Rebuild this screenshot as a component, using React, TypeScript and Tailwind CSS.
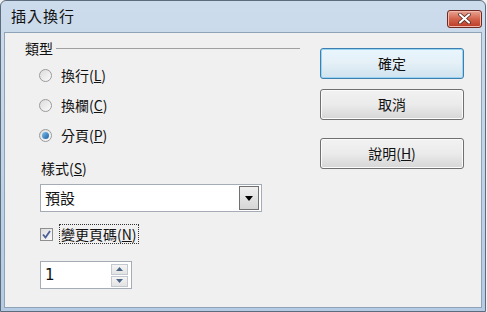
import React from "react";

const font = { fontFamily: '"Noto Sans CJK TC", "Noto Sans", sans-serif' };

function Radio({ checked }: { checked?: boolean }) {
  return (
    <span className="relative flex h-[13px] w-[13px] items-center justify-center rounded-full border border-[#9a9a9a] bg-gradient-to-br from-[#dcdcdc] to-[#fbfbfb]">
      {checked && (
        <span className="h-[7px] w-[7px] rounded-full bg-gradient-to-br from-[#7ec2f1] to-[#1a5f9e]" />
      )}
    </span>
  );
}

function Btn({ children, focused }: { children: React.ReactNode; focused?: boolean }) {
  return (
    <div
      className={
        "flex h-[31px] w-[144px] items-center justify-center rounded-[3px] border text-[14px] text-[#111] " +
        (focused
          ? "border-[#3c7fb1] bg-gradient-to-b from-[#eaf6fd] via-[#e4eff6] to-[#cfe3ef] shadow-[inset_0_0_0_1px_#9bd4f1]"
          : "border-[#707070] bg-gradient-to-b from-[#f2f2f2] via-[#ebebeb] to-[#d6d6d6] shadow-[inset_0_0_0_1px_#fbfbfb]")
      }
    >
      {children}
    </div>
  );
}

export default function App() {
  return (
    <div className="h-[312px] w-[487px] overflow-hidden bg-[#eef0f2]" style={font}>
      <div className="mr-[1px] flex h-full flex-col rounded-t-[6px] border border-[#5d6c7c] bg-gradient-to-b from-[#cddcec] to-[#b4cbe3]">
        {/* title bar */}
        <div className="flex h-[31px] shrink-0 items-center justify-between pl-[10px] pr-[3px]">
          <span className="text-[15px] tracking-[1px] text-[#111]">插入換行</span>
          <div className="mt-[4px] flex h-[18px] w-[35px] items-center justify-center rounded-[3px] border border-[#6e2a23] bg-gradient-to-b from-[#e8a493] via-[#d3634c] to-[#b93a25] shadow-[inset_0_0_0_1px_#f0b9ab]">
            <svg width="13" height="11" viewBox="0 0 13 11">
              <path d="M2 1.5 L11 9.5 M11 1.5 L2 9.5" stroke="#4a2018" strokeWidth="3.6" strokeLinecap="round" />
              <path d="M2 1.5 L11 9.5 M11 1.5 L2 9.5" stroke="#ffffff" strokeWidth="2.2" strokeLinecap="round" />
            </svg>
          </div>
        </div>
        {/* content frame */}
        <div className="mx-[3px] mb-[3px] flex flex-1 border border-[#8ea2b8] bg-[#f0f0f0] text-[14px] text-[#111]">
          {/* left column */}
          <div className="flex w-[295px] flex-col">
            <div className="mt-[6px] flex h-[18px] items-center pl-[20px]">
              <span>類型</span>
              <span className="ml-[3px] mt-[1px] h-px flex-1 bg-[#a0a0a0]" />
            </div>
            <div className="mt-[8px] flex flex-col gap-[10px] pl-[34px]">
              <div className="flex h-[20px] items-center gap-[9px]">
                <Radio />
                <span>換行(<u>L</u>)</span>
              </div>
              <div className="flex h-[20px] items-center gap-[9px]">
                <Radio />
                <span>換欄(<u>C</u>)</span>
              </div>
              <div className="flex h-[20px] items-center gap-[9px]">
                <Radio checked />
                <span>分頁(<u>P</u>)</span>
              </div>
            </div>
            <div className="mt-[13px] flex h-[20px] items-center pl-[36px]">
              <span>樣式(<u>S</u>)</span>
            </div>
            <div className="ml-[35px] mt-[6px] flex h-[28px] w-[222px] items-center justify-between border border-[#a5acb5] bg-white pl-[4px] pr-[2px]">
              <span className="text-[15px]">預設</span>
              <div className="flex h-[24px] w-[20px] items-center justify-center border border-[#707070] bg-gradient-to-b from-[#f0f0f0] to-[#d5d5d5]">
                <svg width="8" height="5" viewBox="0 0 8 5">
                  <path d="M0 0 H8 L4 5 Z" fill="#000" />
                </svg>
              </div>
            </div>
            <div className="ml-[35px] mt-[11px] flex h-[22px] items-center gap-[6px]">
              <span className="flex h-[13px] w-[13px] items-center justify-center border border-[#8f8f8f] bg-gradient-to-br from-[#dedede] to-[#fafafa]">
                <svg width="9" height="9" viewBox="0 0 9 9">
                  <path d="M1 4.5 L3.5 7.5 L8 1" stroke="#4a5f97" strokeWidth="1.8" fill="none" />
                </svg>
              </span>
              <span className="border border-dotted border-[#333] px-[1px] leading-[18px]">
                變更頁碼(<u>N</u>)
              </span>
            </div>
            <div className="ml-[35px] mt-[16px] flex h-[28px] w-[92px] items-center justify-between border border-[#a5acb5] bg-white pl-[4px] pr-[3px]">
              <span className="text-[15px]" style={{ fontFamily: '"DejaVu Sans", sans-serif' }}>1</span>
              <div className="flex flex-col gap-[1px]">
                <div className="flex h-[11px] w-[17px] items-center justify-center border border-[#c3c8cf] bg-gradient-to-b from-[#f5f5f5] to-[#e3e3e3]">
                  <svg width="7" height="4" viewBox="0 0 7 4"><path d="M0 4 H7 L3.5 0 Z" fill="#4b6486" /></svg>
                </div>
                <div className="flex h-[11px] w-[17px] items-center justify-center border border-[#c3c8cf] bg-gradient-to-b from-[#f5f5f5] to-[#e3e3e3]">
                  <svg width="7" height="4" viewBox="0 0 7 4"><path d="M0 0 H7 L3.5 4 Z" fill="#4b6486" /></svg>
                </div>
              </div>
            </div>
          </div>
          {/* right column */}
          <div className="ml-[20px] mt-[15px] flex flex-col">
            <Btn focused>確定</Btn>
            <div className="mt-[10px]">
              <Btn>取消</Btn>
            </div>
            <div className="mt-[18px]">
              <Btn>說明(<u>H</u>)</Btn>
            </div>
          </div>
        </div>
      </div>
    </div>
  );
}
